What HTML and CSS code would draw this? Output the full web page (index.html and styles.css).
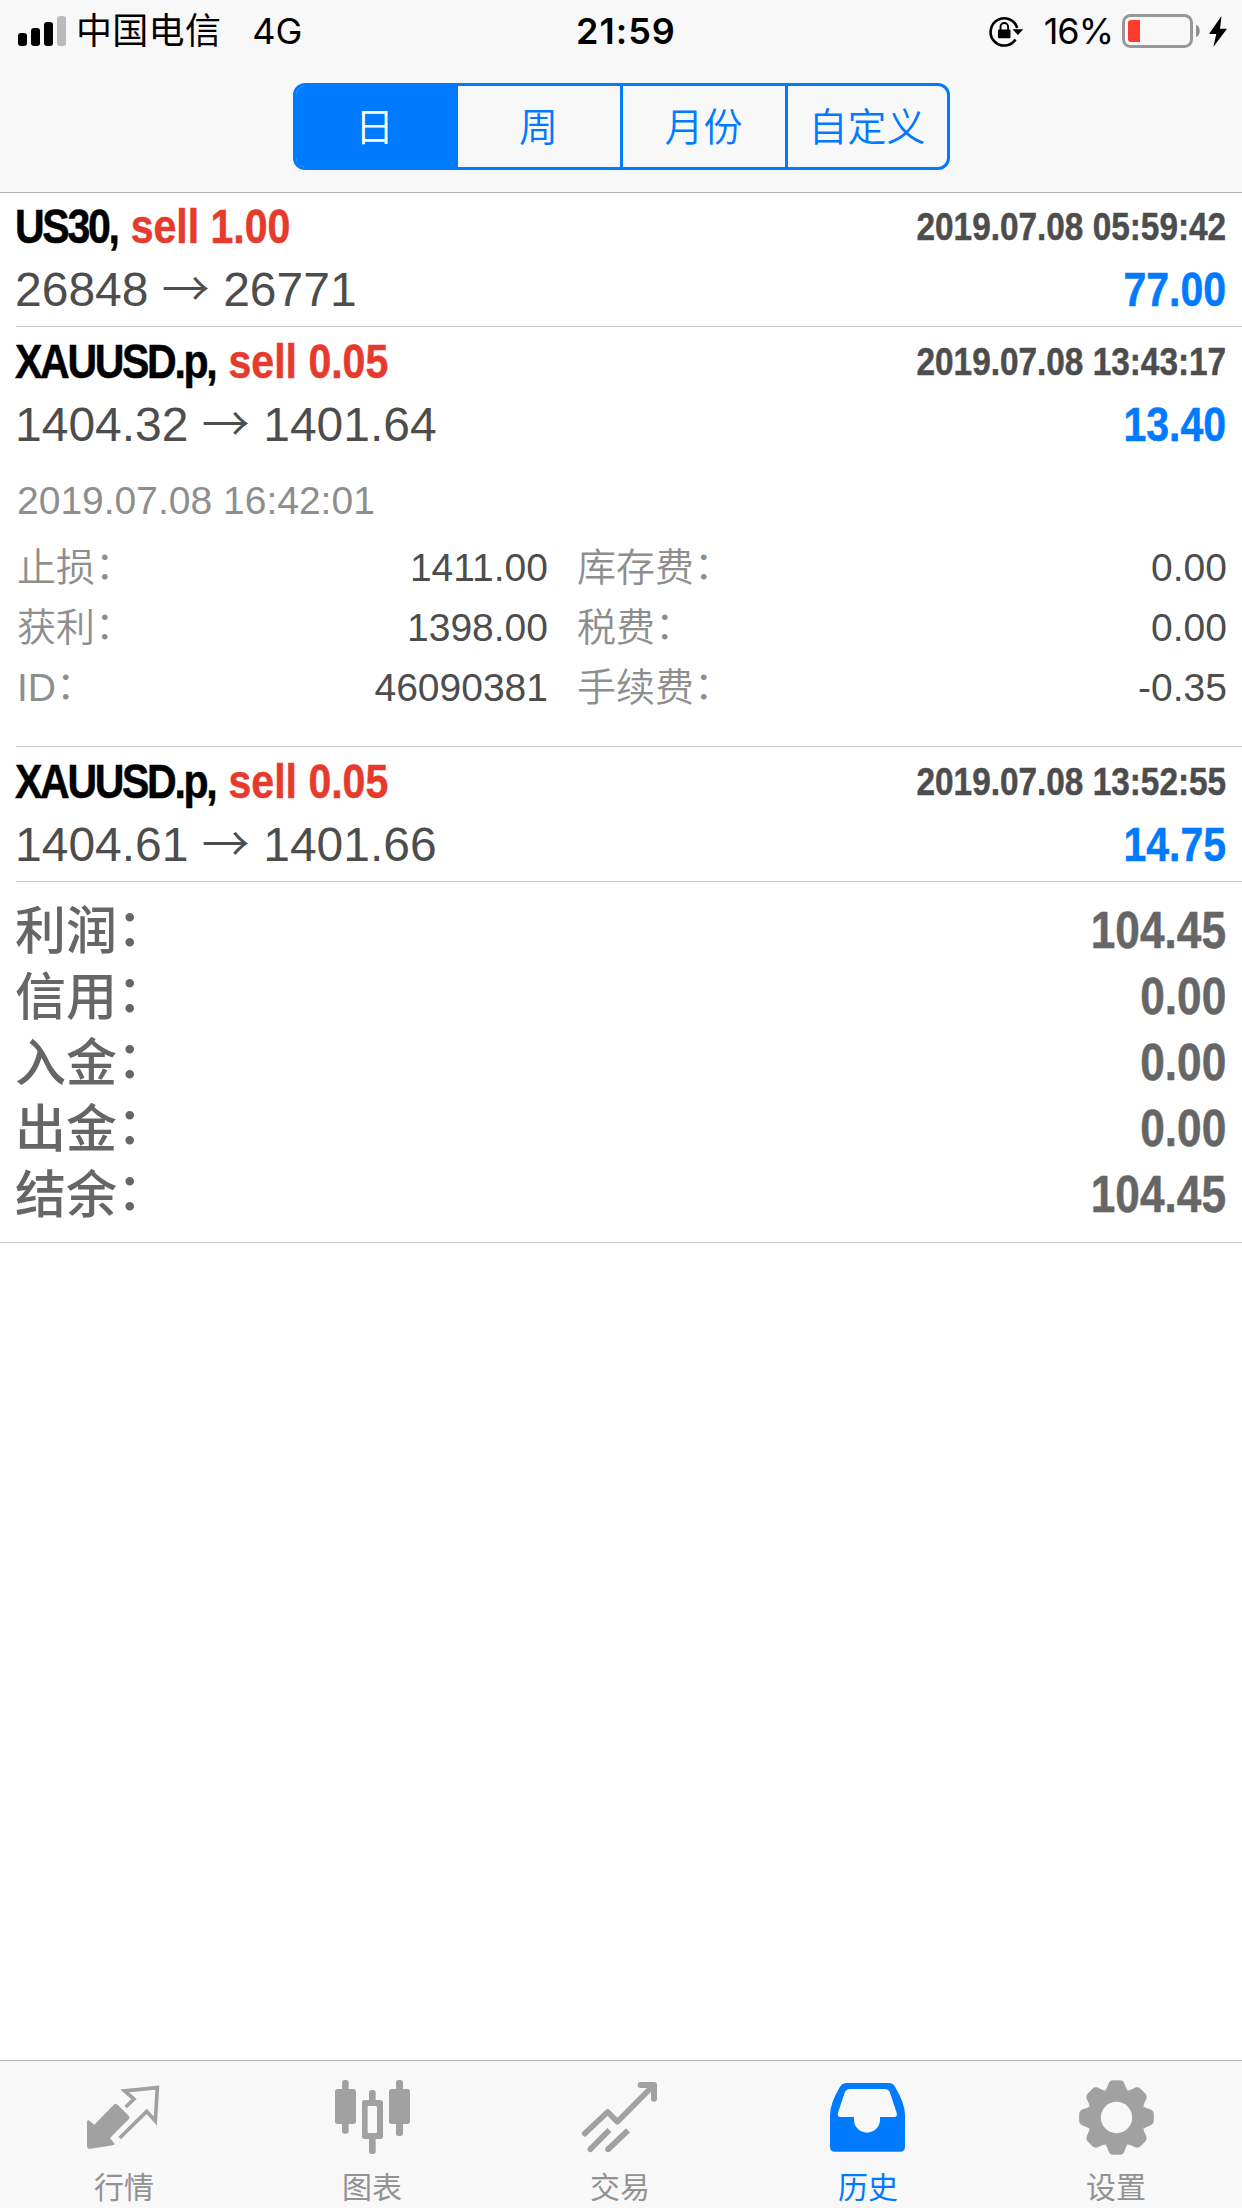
FILE: index.html
```html
<!DOCTYPE html>
<html lang="zh-CN">

<head>
  <meta charset="UTF-8">
  <meta name="viewport" content="width=device-width, initial-scale=1">
  <title>历史</title>
  <link rel="stylesheet" href="styles.css">
</head>

<body>
  <header class="header">
    <div class="status">
      <div class="status-left">
        <svg class="signal" width="48" height="30" viewBox="0 0 48 30">
          <rect x="0" y="17" width="9" height="13" rx="3"/>
          <rect x="13" y="12" width="9" height="18" rx="3"/>
          <rect x="26" y="6" width="9" height="24" rx="3"/>
          <rect x="39" y="0" width="9" height="30" rx="3" fill="#bbb"/>
        </svg>
        <span class="carrier">中国电信</span>
        <span class="network">4G</span>
      </div>
      <div class="time">21:59</div>
      <div class="status-right">
        <svg class="lock" width="35" height="32" viewBox="0 0 35 32">
          <path d="M26.5 24.5A13.6 13.6 0 1 1 28.2 13" fill="none" stroke="#000" stroke-width="2.6"/>
          <path d="M23.5 14.2h10.8l-5.4 5.8z"/>
          <rect x="9" y="14.5" width="12.5" height="8.8" rx="1"/>
          <path d="M11.5 15v-3.2a3.8 3.8 0 0 1 7.6 0v3.2" fill="none" stroke="#000" stroke-width="1.9"/>
        </svg>
        <span class="percent">16%</span>
        <svg class="battery" width="79" height="34" viewBox="0 0 79 34">
          <rect x="1.5" y="1.5" width="68" height="31" rx="7" fill="none" stroke="#979797" stroke-width="3"/>
          <path d="M9 6h9v22H9a3 3 0 0 1-3-3V9a3 3 0 0 1 3-3z" fill="#ff3b30"/>
          <path d="M74 11c5 1 5 11 0 12z" fill="#8e8e8e"/>
        </svg>
        <svg class="bolt" width="18" height="31" viewBox="0 0 18 31">
          <path d="M12.5 0L0 18h7.3L4.3 31 18 12.8h-7z"/>
        </svg>
      </div>
    </div>
    <div class="segments">
      <div class="segment active">日</div>
      <div class="segment">周</div>
      <div class="segment">月份</div>
      <div class="segment">自定义</div>
    </div>
  </header>

  <main class="history">
    <section class="deal">
      <div class="line title">
        <div class="symbol"><span class="pair">US30,</span> <span class="sell">sell 1.00</span></div>
        <div class="date">2019.07.08 05:59:42</div>
      </div>
      <div class="line">
        <div class="price">26848 <span class="arrow">→</span> 26771</div>
        <div class="profit">77.00</div>
      </div>
    </section>

    <section class="deal">
      <div class="line title">
        <div class="symbol"><span class="pair">XAUUSD.p,</span> <span class="sell">sell 0.05</span></div>
        <div class="date">2019.07.08 13:43:17</div>
      </div>
      <div class="line">
        <div class="price">1404.32 <span class="arrow">→</span> 1401.64</div>
        <div class="profit">13.40</div>
      </div>
      <div class="details">
        <div class="close-time">2019.07.08 16:42:01</div>
        <div class="grid">
          <div class="field"><span class="name">止损<i class="colon">：</i></span><span>1411.00</span></div>
          <div class="field"><span class="name">库存费<i class="colon">：</i></span><span>0.00</span></div>
          <div class="field"><span class="name">获利<i class="colon">：</i></span><span>1398.00</span></div>
          <div class="field"><span class="name">税费<i class="colon">：</i></span><span>0.00</span></div>
          <div class="field"><span class="name">ID<i class="colon">：</i></span><span>46090381</span></div>
          <div class="field"><span class="name">手续费<i class="colon">：</i></span><span>-0.35</span></div>
        </div>
      </div>
    </section>

    <section class="deal">
      <div class="line title">
        <div class="symbol"><span class="pair">XAUUSD.p,</span> <span class="sell">sell 0.05</span></div>
        <div class="date">2019.07.08 13:52:55</div>
      </div>
      <div class="line">
        <div class="price">1404.61 <span class="arrow">→</span> 1401.66</div>
        <div class="profit">14.75</div>
      </div>
    </section>

    <section class="summary">
      <div class="total"><span class="label">利润<i class="colon">：</i></span><span class="amount">104.45</span></div>
      <div class="total"><span class="label">信用<i class="colon">：</i></span><span class="amount">0.00</span></div>
      <div class="total"><span class="label">入金<i class="colon">：</i></span><span class="amount">0.00</span></div>
      <div class="total"><span class="label">出金<i class="colon">：</i></span><span class="amount">0.00</span></div>
      <div class="total"><span class="label">结余<i class="colon">：</i></span><span class="amount">104.45</span></div>
    </section>
  </main>

  <nav class="tabs">
    <div class="tab">
      <svg viewBox="87 78 270 240">
        <path d="M193 163q5-3 10 1l33 33q5 5 1 10l-57 57 13 17q2 4-4 5l-67 10q-11 2-11-9v-72q0-6 5-4l17 13z"/>
        <path d="M227 171l25-24-28-24 98-10-6 100-26-29-81 80" fill="none" stroke="#a1a1a1" stroke-width="11"/>
      </svg>
      <span>行情</span>
    </div>
    <div class="tab">
      <svg viewBox="831 78 270 240">
        <rect x="876" y="90" width="20" height="161" rx="8"/>
        <rect x="855" y="117" width="63" height="105" rx="8"/>
        <rect x="1038" y="90" width="21" height="168" rx="8"/>
        <rect x="1017" y="117" width="63" height="105" rx="8"/>
        <rect x="957" y="120" width="20" height="192" rx="8"/>
        <rect x="936" y="150" width="63" height="117" rx="8"/>
        <rect x="953" y="168" width="28" height="81" rx="4" fill="#f8f8f8"/>
      </svg>
      <span>图表</span>
    </div>
    <div class="tab">
      <svg viewBox="75 78 270 240">
        <g fill="none" stroke="#a1a1a1" stroke-width="17" stroke-linejoin="round">
          <path d="M104 251l69-65 29 29L308 109" stroke-linecap="round"/>
          <path d="M272 105h40v41" stroke-width="18" stroke-linecap="round"/>
          <path d="M178 240l-57 58M234 241l-60 57"/>
        </g>
        <circle cx="121" cy="298" r="8.5"/>
        <circle cx="174" cy="298" r="8.5"/>
        <path d="M284 105h28v28z"/>
      </svg>
      <span>交易</span>
    </div>
    <div class="tab active">
      <svg viewBox="819 78 270 240">
        <path fill-rule="evenodd" d="M890 99h126q13 0 19 11 30 50 30 85v95q0 15-15 15H855q-15 0-15-15v-95q0-35 30-85 7-11 20-11zM900 117q-12 0-16 11l-20 60q-3 13 8 13h40v8a39 39 0 0 0 78 0v-8h42q11 0 8-13l-20-60q-4-11-16-11z"/>
      </svg>
      <span>历史</span>
    </div>
    <div class="tab">
      <svg viewBox="363 78 270 240">
        <g transform="translate(499.5 202.5)">
          <circle r="87"/>
          <g id="teeth">
            <path id="tooth" d="M-34-81q5-5 8-15 4-16 16-16h20q12 0 16 16 3 10 8 15z"/>
            <use href="#tooth" transform="rotate(45)"/>
            <use href="#tooth" transform="rotate(90)"/>
            <use href="#tooth" transform="rotate(135)"/>
          </g>
          <use href="#teeth" transform="rotate(180)"/>
          <circle r="47" fill="#f8f8f8"/>
        </g>
      </svg>
      <span>设置</span>
    </div>
  </nav>
</body>

</html>
```
FILE: styles.css
```css
* {
  box-sizing: border-box;
}

body {
  margin: 0;
  height: 2208px;
  display: flex;
  flex-direction: column;
  background: #fff;
  color: #4d4d4d;
  font-family: "Liberation Sans", "Noto Sans CJK SC", sans-serif;
}

svg {
  display: block;
}

.header {
  height: 193px;
  background: #f8f8f8;
  border-bottom: 1px solid #b2b2b2;
}

.status {
  display: grid;
  grid-template-columns: 1fr auto 1fr;
  align-items: center;
  height: 60px;
  padding: 2px 15px 0 18px;
  color: #000;
  font: 36px/58px Inter, "Noto Sans CJK SC", sans-serif;
}

.status-left,
.status-right {
  display: flex;
  align-items: center;
}

.status-right {
  justify-content: flex-end;
}

.carrier {
  margin-left: 10px;
  letter-spacing: 0.3px;
}

.network {
  margin-left: 31px;
}

.time {
  padding-left: 7px;
  font-weight: 600;
  letter-spacing: 1px;
}

.percent {
  margin: 0 9px 0 20px;
  letter-spacing: -1px;
}

.bolt {
  margin-left: 8px;
}

.segments {
  display: grid;
  grid-template-columns: 162px 162px 165px 162px;
  width: 657px;
  height: 87px;
  margin: 23px auto 0;
  border: 3px solid #007aff;
  border-radius: 12px;
  overflow: hidden;
}

.segment {
  border-left: 3px solid #007aff;
  color: #007aff;
  font: 350 39px/77px "Noto Sans CJK SC", sans-serif;
  text-align: center;
}

.segment.active {
  padding-right: 4px;
  background: #007aff;
  color: #fff;
}

.segment.active,
.segment.active + .segment {
  border-left: 0;
}

.deal {
  margin-left: 16px;
  padding: 20px 16px 0 0;
  border-bottom: 1px solid #c8c7cc;
}

.deal:first-child {
  padding-top: 19px;
}

.line {
  display: flex;
  justify-content: space-between;
  height: 56px;
  font-size: 48px;
  line-height: 56px;
  white-space: nowrap;
}

.title {
  margin-top: -13px;
  margin-bottom: 7px;
}

.line:nth-child(2) {
  height: 64px;
}

/* condensed bold */
.symbol,
.date,
.profit,
.amount {
  font-weight: bold;
  transform: scaleX(0.855);
  transform-origin: right;
  -webkit-text-stroke: 0.5px;
}

.symbol {
  margin-left: -1px;
  color: #000;
  transform-origin: left;
}

.pair {
  margin-right: 2px;
  letter-spacing: -2.7px;
}

.sell {
  color: #e63a2c;
}

.date {
  font-size: 39px;
}

.profit {
  color: #007aff;
}

.price {
  margin-left: -1px;
}

.arrow {
  font-family: "Noto Sans CJK SC", sans-serif;
  font-weight: 350;
  line-height: 0;
}

.details {
  height: 285px;
  padding-top: 17px;
  font-size: 39px;
}

.close-time {
  height: 67px;
  padding-left: 1px;
  line-height: 46px;
  color: #8e8e8e;
}

.grid {
  display: grid;
  grid-template-columns: 532px 1fr;
  column-gap: 28px;
  margin-right: -1px;
}

.field {
  display: flex;
  justify-content: space-between;
  height: 60px;
  line-height: 46px;
}

.name {
  padding-left: 1px;
  color: #8e8e8e;
  font-weight: 350;
}

.colon {
  font-family: "Noto Sans CJK SC", sans-serif;
  font-style: normal;
  line-height: 0;
  vertical-align: 0.05em;
}

.summary {
  height: 361px;
  padding: 16px 16px 0;
  border-bottom: 1px solid #c8c7cc;
  color: #666;
  font-size: 51px;
}

.total {
  display: flex;
  justify-content: space-between;
  height: 66px;
  line-height: 66px;
}

.label {
  margin-left: -1px;
  font-family: "Noto Sans CJK SC", sans-serif;
  font-weight: 500;
  line-height: 58px;
}

.amount {
  transform: scaleX(0.867);
}

.tabs {
  display: flex;
  height: 148px;
  margin-top: auto;
  padding: 15px 2px 0 0;
  background: #f8f8f8;
  border-top: 1px solid #b2b2b2;
}

.tab {
  flex: 1;
  display: flex;
  flex-direction: column;
  align-items: center;
  color: #929292;
  fill: #a1a1a1;
  font: 30px/44px "Noto Sans CJK SC", sans-serif;
}

.tab svg {
  width: 90px;
  height: 80px;
  margin-bottom: 7px;
}

.tab.active {
  color: #007aff;
  fill: #007aff;
}
```
